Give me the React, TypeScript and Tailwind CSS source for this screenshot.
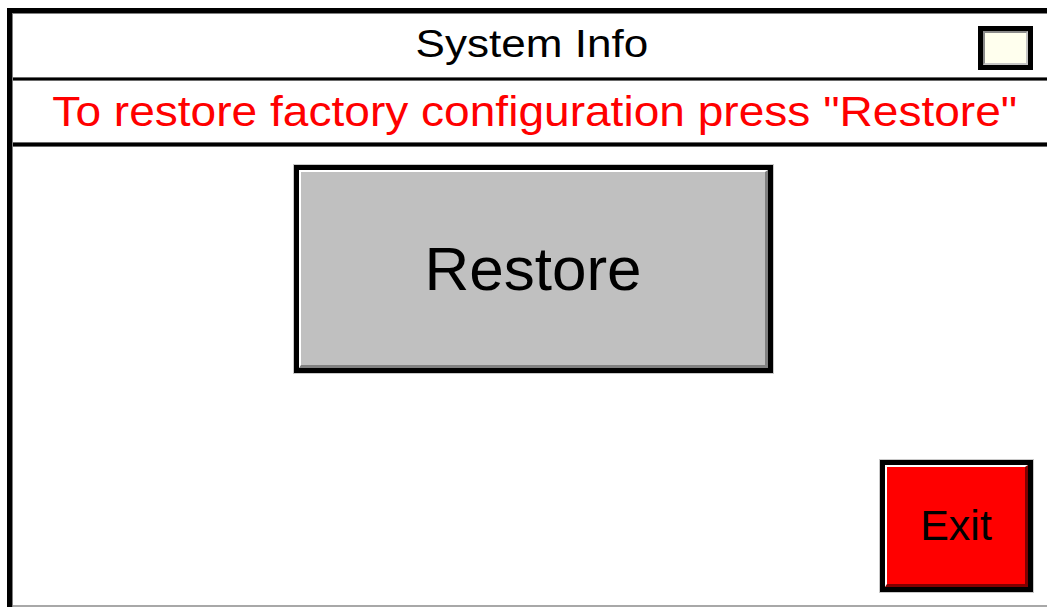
import React from 'react';

const font = { fontFamily: '"Liberation Sans", Arial, sans-serif' };

const Bevel: React.FC<{ fill: string; dark: string; className: string; children: React.ReactNode }> = ({ fill, dark, className, children }) => (
  <button className={`border-[5px] border-black ring-1 ring-[#c8c8c8] ${className}`}>
    <div
      className="w-full h-full flex items-center justify-center border-t-2 border-l-2 border-white border-r-[3px] border-b-[3px]"
      style={{ backgroundColor: fill, borderRightColor: dark, borderBottomColor: dark }}
    >
      {children}
    </div>
  </button>
);

export default function App() {
  return (
    <div className="w-[1047px] h-[607px] bg-white overflow-hidden pt-[8px] pl-[7px]" style={font}>
      <div className="w-[1060px] h-[599px] border-l-[5px] border-t-[5px] border-black">
        <div className="w-[1038px] h-full flex flex-col border-l border-t border-[#808080]">
          {/* header */}
          <div className="h-[63px] grid grid-cols-[1fr_auto_1fr] items-center">
            <div />
            <div className="pb-[4px] text-[39px] leading-none text-black scale-x-[1.13]">System Info</div>
            <div className="flex justify-end pr-[17px] pt-[4px]">
              <div className="w-[55px] h-[44px] border-[5px] border-black">
                <div className="w-full h-full bg-[#ffffee] border-t-2 border-l-2 border-[#8a8a8a] border-r-2 border-b-2 border-r-[#c4c4c4] border-b-[#c4c4c4]" />
              </div>
            </div>
          </div>
          <div className="h-[4px] bg-black border-y border-[#6a6a6a]" />

          {/* message */}
          <div className="h-[61px] flex items-center justify-center">
            <span className="ml-[7px] inline-block text-[42px] leading-none text-[#ff0000] scale-x-[1.097]">
              To restore factory configuration press "Restore"
            </span>
          </div>
          <div className="h-[5px] bg-black border-y border-[#6a6a6a]" />

          {/* body */}
          <div className="flex-1 flex flex-col border-b-2 border-[#a8a8a8]">
            <div className="flex justify-center pt-[18px] pl-[4px]">
              <Bevel fill="#c0c0c0" dark="#808080" className="w-[479px] h-[208px]">
                <span className="text-[62px] leading-none text-black">Restore</span>
              </Bevel>
            </div>
            <div className="mt-auto flex justify-end pr-[17px] pb-[13px]">
              <Bevel fill="#ff0000" dark="#800000" className="w-[153px] h-[132px]">
                <span className="text-[43px] leading-none text-black">Exit</span>
              </Bevel>
            </div>
          </div>
        </div>
      </div>
    </div>
  );
}
